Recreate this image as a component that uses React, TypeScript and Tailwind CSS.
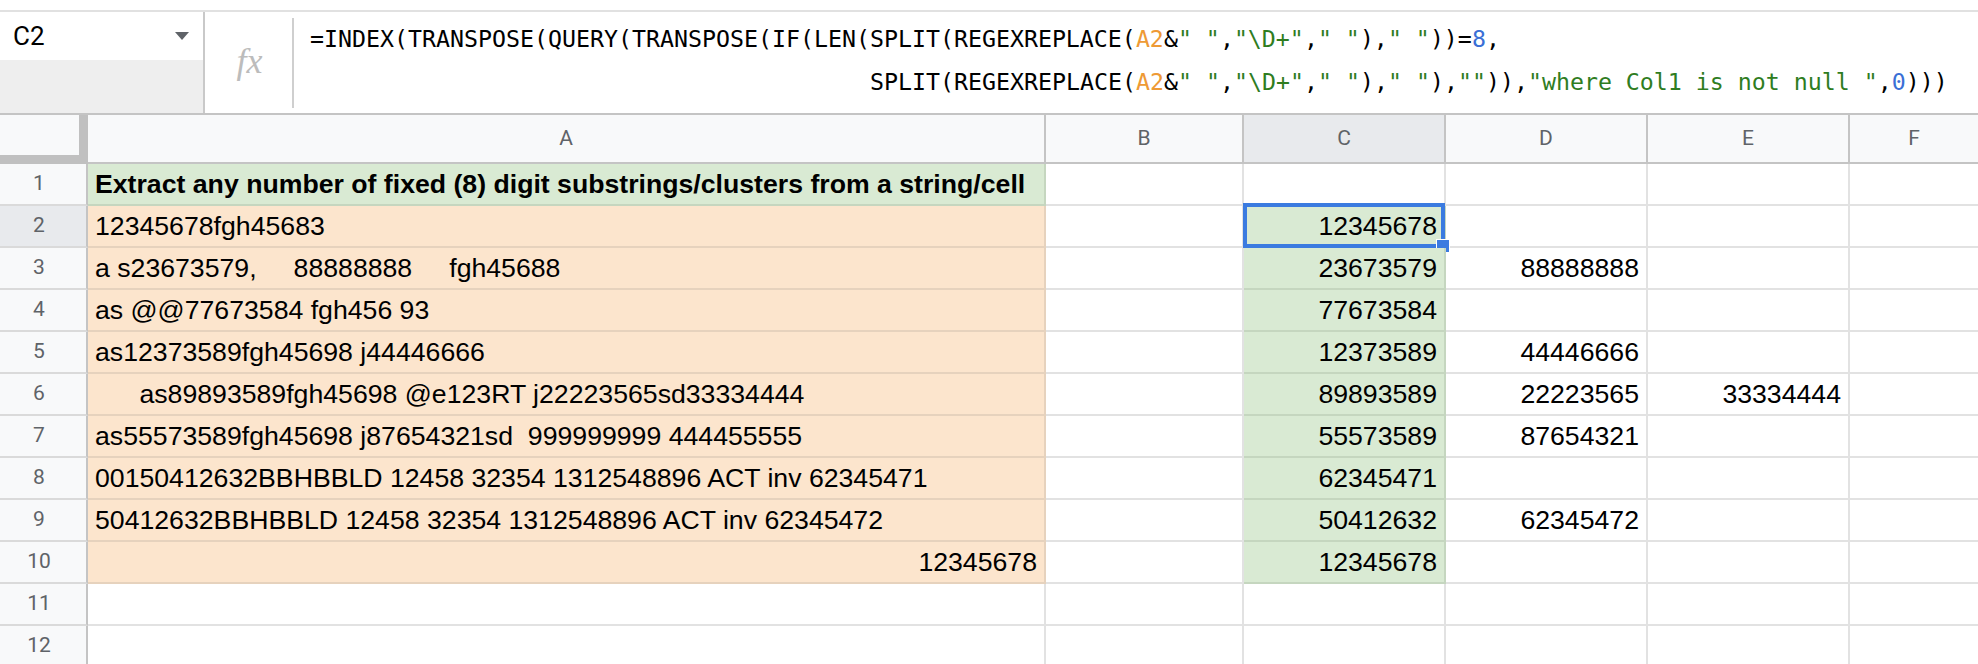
import React from "react";

// Column widths include the 2px right grid line.
const COLS = [
  { key: "A", w: "w-[958px]" },
  { key: "B", w: "w-[198px]" },
  { key: "C", w: "w-[202px]" },
  { key: "D", w: "w-[202px]" },
  { key: "E", w: "w-[202px]" },
];

type Row = { a: string; c?: string; d?: string; e?: string; bold?: boolean; right?: boolean };

const ROWS: Row[] = [
  { a: "Extract any number of fixed (8) digit substrings/clusters from a string/cell", bold: true },
  { a: "12345678fgh45683", c: "12345678" },
  { a: "a s23673579,     88888888     fgh45688", c: "23673579", d: "88888888" },
  { a: "as @@77673584 fgh456 93", c: "77673584" },
  { a: "as12373589fgh45698 j44446666", c: "12373589", d: "44446666" },
  { a: "      as89893589fgh45698 @e123RT j22223565sd33334444", c: "89893589", d: "22223565", e: "33334444" },
  { a: "as55573589fgh45698 j87654321sd  999999999 444455555", c: "55573589", d: "87654321" },
  { a: "00150412632BBHBBLD 12458 32354 1312548896 ACT inv 62345471", c: "62345471" },
  { a: "50412632BBHBBLD 12458 32354 1312548896 ACT inv 62345472", c: "50412632", d: "62345472" },
  { a: "12345678", c: "12345678", right: true },
  { a: "" },
  { a: "" },
];

const Str = ({ children }: { children: React.ReactNode }) => (
  <span className="text-[#2f7d1f]">{children}</span>
);
const Ref = ({ children }: { children: React.ReactNode }) => (
  <span className="text-[#ee9a35]">{children}</span>
);
const Num = ({ children }: { children: React.ReactNode }) => (
  <span className="text-[#3a6fd6]">{children}</span>
);

function FormulaBar() {
  return (
    <div className="flex h-[105px] border-t-2 border-b-2 border-t-[#e1e1e1] border-b-[#c4c4c4]">
      {/* name box */}
      <div className="flex w-[205px] flex-col border-r-2 border-[#c9c9c9]">
        <div className="flex h-[48px] items-center justify-between bg-white pl-[13px] pr-[14px]">
          <span className="font-['Roboto'] text-[26px] text-black">C2</span>
          <span className="h-0 w-0 border-l-[7px] border-r-[7px] border-t-[8px] border-l-transparent border-r-transparent border-t-[#5f6368]" />
        </div>
        <div className="flex-1 bg-[#eeeeee]" />
      </div>
      {/* fx */}
      <div className="flex w-[87px] items-center justify-center">
        <span className="pb-[4px] pl-[2px] font-['Liberation_Serif'] text-[36px] italic text-[#bcbcbc]">fx</span>
      </div>
      <div className="mb-[5px] mt-[6px] w-[2px] bg-[#cfcfcf]" />
      {/* formula */}
      <div className="flex-1 whitespace-pre pl-[16px] pt-[5px] font-['DejaVu_Sans_Mono'] text-[23.25px] leading-[43px] text-black">
        <div>
          =INDEX(TRANSPOSE(QUERY(TRANSPOSE(IF(LEN(SPLIT(REGEXREPLACE(<Ref>A2</Ref>&amp;<Str>" "</Str>,<Str>"\D+"</Str>,<Str>" "</Str>),<Str>" "</Str>))=<Num>8</Num>,
        </div>
        <div>
          {"                                        "}SPLIT(REGEXREPLACE(<Ref>A2</Ref>&amp;<Str>" "</Str>,<Str>"\D+"</Str>,<Str>" "</Str>),<Str>" "</Str>),<Str>""</Str>)),<Str>"where Col1 is not null "</Str>,<Num>0</Num>)))
        </div>
      </div>
    </div>
  );
}

function HeaderRow() {
  return (
    <div className="flex h-[49px]">
      <div className="h-[49px] w-[88px] border-b-[9px] border-r-[9px] border-[#c0c0c0] bg-[#f8f9fa]" />
      {COLS.map((c) => (
        <div
          key={c.key}
          className={`${c.w} flex items-center justify-center border-b-2 border-r-2 border-[#c4c4c4] font-['Roboto'] text-[21px] text-[#5f6368] ${
            c.key === "C" ? "bg-[#e8eaed]" : "bg-[#f8f9fa]"
          }`}
        >
          {c.key}
        </div>
      ))}
      <div className="flex flex-1 items-center justify-center border-b-2 border-[#c4c4c4] bg-[#f8f9fa] font-['Roboto'] text-[21px] text-[#5f6368]">
        F
      </div>
    </div>
  );
}

function DataRow({ row, n }: { row: Row; n: number }) {
  const hasA = n <= 10;
  const aBg = n === 1 ? "bg-[#d9ead3] border-[#c5d6bf]" : hasA ? "bg-[#fce5cd] border-[#e6d2bd]" : "bg-white border-[#e2e2e2]";
  const cGreen = n >= 2 && n <= 10;
  const cell = "flex h-full items-center border-b-2 border-r-2 leading-[30px]";
  return (
    <div className="flex h-[42px] font-['Liberation_Sans'] text-[26.67px] text-black">
      <div
        className={`flex h-full w-[88px] items-center justify-center border-b-2 border-r-2 border-b-[#dadada] border-r-[#c4c4c4] pr-[8px] font-['Roboto'] text-[21px] text-[#5f6368] ${
          n === 2 ? "bg-[#e8eaed]" : "bg-[#f8f9fa]"
        }`}
      >
        {n}
      </div>
      <div
        className={`${cell} w-[958px] whitespace-pre px-[7px] ${aBg} ${row.right ? "justify-end" : ""} ${
          row.bold ? "font-bold" : ""
        }`}
      >
        {row.a}
      </div>
      <div className={`${cell} w-[198px] border-[#e2e2e2] bg-white`} />
      <div
        className={`${cell} relative w-[202px] justify-end pr-[7px] ${
          cGreen ? "border-[#c5d6bf] bg-[#d9ead3]" : "border-[#e2e2e2] bg-white"
        }`}
      >
        {row.c}
        {n === 2 && (
          <>
            <div className="absolute -left-[1px] -top-[3px] h-[45px] w-[202px] border-4 border-[#3b7be0]" />
            <div className="absolute left-[192px] top-[33px] h-[14px] w-[14px] border border-white bg-[#3b7be0]" />
          </>
        )}
      </div>
      <div className={`${cell} w-[202px] justify-end border-[#e2e2e2] bg-white pr-[7px]`}>{row.d}</div>
      <div className={`${cell} w-[202px] justify-end border-[#e2e2e2] bg-white pr-[7px]`}>{row.e}</div>
      <div className="h-full flex-1 border-b-2 border-[#e2e2e2] bg-white" />
    </div>
  );
}

export default function App() {
  return (
    <div className="h-[664px] w-[1978px] overflow-hidden bg-white">
      <div className="h-[10px]" />
      <FormulaBar />
      <HeaderRow />
      {ROWS.map((r, i) => (
        <DataRow key={i} row={r} n={i + 1} />
      ))}
    </div>
  );
}
